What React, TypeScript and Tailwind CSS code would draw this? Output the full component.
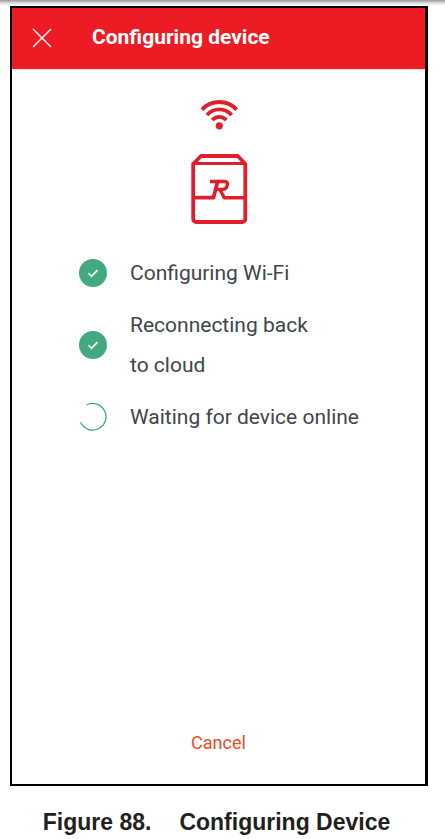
type StepStatus = 'done' | 'pending';

const steps: { label: string; status: StepStatus }[] = [
  { label: 'Configuring Wi-Fi', status: 'done' },
  { label: 'Reconnecting back to cloud', status: 'done' },
  { label: 'Waiting for device online', status: 'pending' },
];

function CloseIcon() {
  return (
    <svg className="h-5 w-5" viewBox="0 0 20 20" fill="none" stroke="currentColor" strokeWidth="1.4">
      <path d="M1 1l18 18M19 1L1 19" />
    </svg>
  );
}

function DeviceIllustration() {
  return (
    <svg
      className="h-32 w-[60px] text-[#e01f2a]"
      viewBox="0 0 60 128"
      fill="none"
      stroke="currentColor"
      strokeWidth="3.8"
      strokeLinejoin="round"
    >
      {/* wifi */}
      <path d="M13 11.6a23.5 23.5 0 0 1 34.6 0" />
      <path d="M18 16.9a16.5 16.5 0 0 1 24.6 0" />
      <path d="M23.2 22.1a9.5 9.5 0 0 1 14.2 0" />
      <circle cx="30.3" cy="27.8" r="3.6" fill="currentColor" stroke="none" />
      {/* water heater body */}
      <path d="M4.200 66L12 58h36.800l7.500 8v55a3 3 0 0 1-3 3H7.200a3 3 0 0 1-3-3z" />
      <path d="M5 65.500h51" strokeWidth="2.800" />
      {/* R badge on the divider line */}
      <path d="M4 99.700h20.500L28.500 84" strokeWidth="3.7" />
      <path d="M21 83.500h14.500c2.500 0 3.400 1.200 2.800 3.400l-.4 1.500c-.6 2.200-1.900 3-4.400 3h-6.500M31 91.400l4.200 8.300h21" strokeWidth="3.4" />
    </svg>
  );
}

function StepIcon({ status }: { status: StepStatus }) {
  if (status === 'pending') {
    return (
      <svg className="h-7 w-7 shrink-0 text-[#41a982]" viewBox="0 0 28 28" fill="none" stroke="currentColor" strokeWidth="1.3">
        <path d="M7.500 2A13.300 13.300 0 1 1 1.600 19.300" />
      </svg>
    );
  }
  return (
    <svg className="h-7 w-7 shrink-0" viewBox="0 0 28 28" fill="none">
      <circle cx="14" cy="14" r="14" fill="#43a980" />
      <path d="M9.500 14.300l3 3 6-6.200" stroke="white" strokeWidth="1.6" />
    </svg>
  );
}

export default function App() {
  return (
    <div className="flex min-h-screen flex-col bg-white font-['Roboto',sans-serif]">
      <div className="h-1.5 bg-linear-to-b from-[#999999] via-[#dddddd] to-white" />

      <main className="mr-[17px] ml-2.5 flex flex-1 flex-col border-2 border-r-3 border-black">
        <header className="flex h-[61px] items-center gap-10 bg-[#ed1c24] pb-0.5 pl-5 text-white shadow-sm">
          <button type="button" aria-label="Close">
            <CloseIcon />
          </button>
          <h1 className="text-[21px] font-bold">Configuring device</h1>
        </header>

        <div className="mt-[29px] flex justify-center">
          <DeviceIllustration />
        </div>

        <ul className="mt-[27px] flex flex-col gap-3 pr-10 pl-[67px] text-[21px] leading-10 text-[#40464b]">
          {steps.map((step) => (
            <li key={step.label} className="flex items-center gap-[23px]">
              <StepIcon status={step.status} />
              <span className={step.status === 'done' ? 'max-w-48' : ''}>{step.label}</span>
            </li>
          ))}
        </ul>

        <div className="mt-auto mb-[27px] flex justify-center">
          <button type="button" className="text-lg text-[#f04a23]">
            Cancel
          </button>
        </div>
      </main>

      <p className="flex justify-center gap-7 pt-5 pr-3 pb-px font-['Liberation_Sans',sans-serif] text-[23px] leading-8 font-bold text-[#231f20]">
        <span>Figure 88.</span>
        <span>Configuring Device</span>
      </p>
    </div>
  );
}
